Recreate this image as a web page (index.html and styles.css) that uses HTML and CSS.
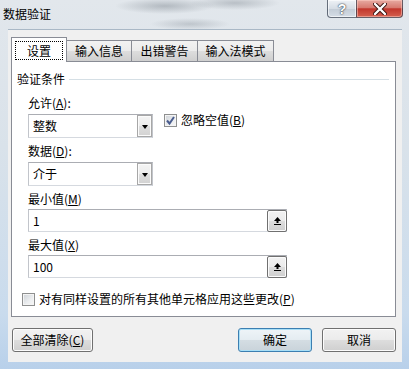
FILE: index.html
```html
<!DOCTYPE html>
<html lang="zh-CN">
<head>
    <meta charset="UTF-8">
    <title>数据验证</title>
    <link rel="stylesheet" href="styles.css">
</head>
<body>
    <div class="window">
        <div class="titlebar">
            <span class="title">数据验证</span>
            <div class="caption">
                <div class="cap-btn help">?</div>
                <div class="cap-btn close">
                    <svg width="14" height="12" viewBox="0 0 14 12">
                        <path d="M2 1 L12 11 M12 1 L2 11" stroke="#3a1410" stroke-width="4.2" stroke-linecap="round"/>
                        <path d="M2 1 L12 11 M12 1 L2 11" stroke="#ffffff" stroke-width="2.4" stroke-linecap="round"/>
                    </svg>
                </div>
            </div>
        </div>
        <div class="client">
            <div class="tabs">
                <div class="tab active"><span class="focus">设置</span></div>
                <div class="tab t1">输入信息</div>
                <div class="tab t2">出错警告</div>
                <div class="tab t3">输入法模式</div>
            </div>
            <div class="panel">
                <div class="group-title"><span>验证条件</span><span class="rule"></span></div>
                <div class="fields">
                    <div class="label first">允许(<u>A</u>):</div>
                    <div class="row">
                        <div class="combo"><span class="value">整数</span><span class="drop"><span class="arrow"></span></span></div>
                        <div class="check ignore">
                            <span class="box">
                                <svg width="11" height="11" viewBox="0 0 11 11">
                                    <path d="M2 5.5 L4.5 8.5 L9 2" fill="none" stroke="#4a5d8e" stroke-width="2"/>
                                </svg>
                            </span>
                            <span>忽略空值(<u>B</u>)</span>
                        </div>
                    </div>
                    <div class="label">数据(<u>D</u>):</div>
                    <div class="combo"><span class="value">介于</span><span class="drop"><span class="arrow"></span></span></div>
                    <div class="label">最小值(<u>M</u>)</div>
                    <div class="input"><span class="value">1</span>
                        <span class="ref">
                            <svg width="9" height="10" viewBox="0 0 9 10">
                                <path d="M4.5 1 L8 5 L1 5 Z" fill="#000"/>
                                <rect x="3.5" y="5" width="2" height="2" fill="#000"/>
                                <rect x="1" y="8" width="7" height="1" fill="#000"/>
                            </svg>
                        </span>
                    </div>
                    <div class="label">最大值(<u>X</u>)</div>
                    <div class="input"><span class="value">100</span>
                        <span class="ref">
                            <svg width="9" height="10" viewBox="0 0 9 10">
                                <path d="M4.5 1 L8 5 L1 5 Z" fill="#000"/>
                                <rect x="3.5" y="5" width="2" height="2" fill="#000"/>
                                <rect x="1" y="8" width="7" height="1" fill="#000"/>
                            </svg>
                        </span>
                    </div>
                </div>
                <div class="check apply">
                    <span class="box"></span>
                    <span>对有同样设置的所有其他单元格应用这些更改(<u>P</u>)</span>
                </div>
            </div>
            <div class="buttons">
                <div class="btn clear">全部清除(<u>C</u>)</div>
                <div class="btn ok">确定</div>
                <div class="btn cancel">取消</div>
            </div>
        </div>
    </div>
</body>
</html>
```

FILE: styles.css
```css
body {
    margin: 0;
    padding: 0;
    font-family: "Noto Sans CJK SC", "Microsoft YaHei", sans-serif;
    font-size: 12px;
    color: #000;
    background-color: #c4d8ec;
}
.window {
    width: 409px;
    height: 369px;
    display: flex;
    flex-direction: column;
    background:
        radial-gradient(ellipse 50px 8px at 165px 6px, rgba(90, 100, 110, 0.35), transparent),
        radial-gradient(ellipse 45px 7px at 235px 3px, rgba(90, 100, 110, 0.3), transparent),
        radial-gradient(ellipse 40px 6px at 190px 24px, rgba(90, 100, 110, 0.25), transparent),
        linear-gradient(#e2e7ec 0%, #d9e2ea 40%, #c9dbed 85%, #b8d0ea 100%);
}
.titlebar {
    height: 29px;
    display: flex;
    align-items: flex-start;
}
.title {
    padding: 6px 0 0 3px;
    line-height: 16px;
}
.caption {
    margin-left: auto;
    margin-right: 6px;
    display: flex;
}
.cap-btn {
    height: 18px;
    box-sizing: border-box;
    display: flex;
    justify-content: center;
    align-items: center;
    border: 1px solid rgba(60, 70, 85, 0.75);
    border-top: none;
}
.help {
    width: 29px;
    border-radius: 0 0 0 4px;
    border-right: none;
    background: linear-gradient(#eef2f6 0%, #d6dde5 50%, #c3ccd6 52%, #d5dde6 100%);
    box-shadow: inset 0 0 0 1px rgba(255, 255, 255, 0.6);
    color: #ffffff;
    font-family: "Liberation Sans", sans-serif;
    font-size: 14px;
    font-weight: bold;
    text-shadow: 0 0 2px #2c3846, 0 0 1px #2c3846;
}
.close {
    width: 47px;
    border-radius: 0 0 4px 0;
    background: linear-gradient(#e7aaa2 0%, #d77a70 45%, #c2362c 52%, #d4604f 100%);
    box-shadow: inset 0 0 0 1px rgba(255, 210, 200, 0.5);
}
.client {
    margin-left: 8px;
    width: 394px;
    height: 333px;
    box-sizing: border-box;
    padding: 8px 6px 0 3px;
    background-color: #f0f0f0;
    border-top: 1px solid #a9b8c6;
    display: flex;
    flex-direction: column;
}
.tabs {
    height: 23px;
    display: flex;
    align-items: flex-end;
}
.tab {
    height: 21px;
    box-sizing: border-box;
    border: 1px solid #898c95;
    border-bottom: none;
    background: linear-gradient(#f2f2f2 0%, #ebebeb 50%, #dddddd 51%, #cfcfcf 100%);
    margin-left: -1px;
    display: flex;
    justify-content: center;
    align-items: center;
    line-height: 16px;
}
.tab.active {
    width: 56px;
    height: 25px;
    margin-left: 0;
    margin-bottom: -1px;
    padding: 3px 3px 2px 3px;
    background: #fff;
    position: relative;
    z-index: 1;
}
.focus {
    flex: 1;
    align-self: stretch;
    border: 1px dotted #000;
    display: flex;
    justify-content: center;
    align-items: center;
}
.t1 {
    width: 66px;
}
.t2 {
    width: 67px;
}
.t3 {
    width: 77px;
}
.panel {
    width: 385px;
    height: 256px;
    box-sizing: border-box;
    border: 1px solid #898c95;
    background-color: #fff;
}
.group-title {
    margin-top: 9px;
    padding-left: 5px;
    line-height: 16px;
    display: flex;
    align-items: center;
}
.rule {
    flex: 1;
    height: 1px;
    margin: 1px 6px 0 4px;
    background-color: #d5dfe5;
}
.fields {
    padding-left: 16px;
}
.label {
    line-height: 16px;
    margin-top: 5px;
}
.label.first {
    margin-top: 8px;
}
.row {
    display: flex;
    align-items: flex-start;
}
.combo, .input {
    height: 24px;
    margin-top: 3px;
    box-sizing: border-box;
    border: 1px solid #abadb3;
    border-color: #abadb3 #c2c5cb #d5d9df #c2c5cb;
    background-color: #fff;
    display: flex;
    align-items: center;
}
.combo {
    width: 125px;
}
.input {
    width: 259px;
    height: 23px;
    margin-top: 2px;
}
.value {
    padding-left: 4px;
    font-size: 12px;
    line-height: 16px;
}
.drop {
    margin-left: auto;
    width: 15px;
    height: 22px;
    box-sizing: border-box;
    border: 1px solid #a7a7a7;
    background: linear-gradient(#f4f4f4 0%, #ececec 50%, #dedede 51%, #d2d2d2 100%);
    box-shadow: inset 0 0 0 1px #fbfbfb;
    display: flex;
    justify-content: center;
    align-items: center;
}
.arrow {
    width: 0;
    height: 0;
    border-left: 3.5px solid transparent;
    border-right: 3.5px solid transparent;
    border-top: 4px solid #000;
    margin-top: 1px;
}
.ref {
    margin-left: auto;
    margin-right: -1px;
    width: 20px;
    height: 22px;
    box-sizing: border-box;
    border: 1px solid #707070;
    border-radius: 2px;
    background: linear-gradient(#f2f2f2 0%, #ebebeb 50%, #dddddd 51%, #cfcfcf 100%);
    box-shadow: inset 0 0 0 1px #fbfbfb;
    display: flex;
    justify-content: center;
    align-items: center;
}
.check {
    display: flex;
    align-items: center;
    line-height: 16px;
}
.box {
    width: 13px;
    height: 13px;
    box-sizing: border-box;
    border: 1px solid #8e8f8f;
    background: linear-gradient(135deg, #cdd1d6 0%, #eceef0 60%, #f7f7f7 100%);
    box-shadow: inset 0 0 0 1px #f4f4f4;
    margin-right: 4px;
    display: flex;
    justify-content: center;
    align-items: center;
}
.ignore {
    margin: 1px 0 0 11px;
}
.apply {
    margin: 13px 0 0 10px;
}
.buttons {
    margin-top: 11px;
    padding-left: 1px;
    display: flex;
}
.btn {
    height: 24px;
    box-sizing: border-box;
    border: 1px solid #707070;
    border-radius: 3px;
    background: linear-gradient(#f2f2f2 0%, #ebebeb 50%, #dddddd 51%, #cfcfcf 100%);
    box-shadow: inset 0 0 0 1px #fcfcfc;
    display: flex;
    justify-content: center;
    align-items: center;
    line-height: 16px;
}
.clear {
    width: 81px;
}
.ok {
    width: 74px;
    margin-left: auto;
    border-color: #3c7fb1;
    box-shadow: inset 0 0 0 1px #a8dff7;
    background: linear-gradient(#eef4f8 0%, #e4ecf1 50%, #d4dde3 51%, #c9d3da 100%);
}
.cancel {
    width: 74px;
    margin-left: 10px;
}
```
